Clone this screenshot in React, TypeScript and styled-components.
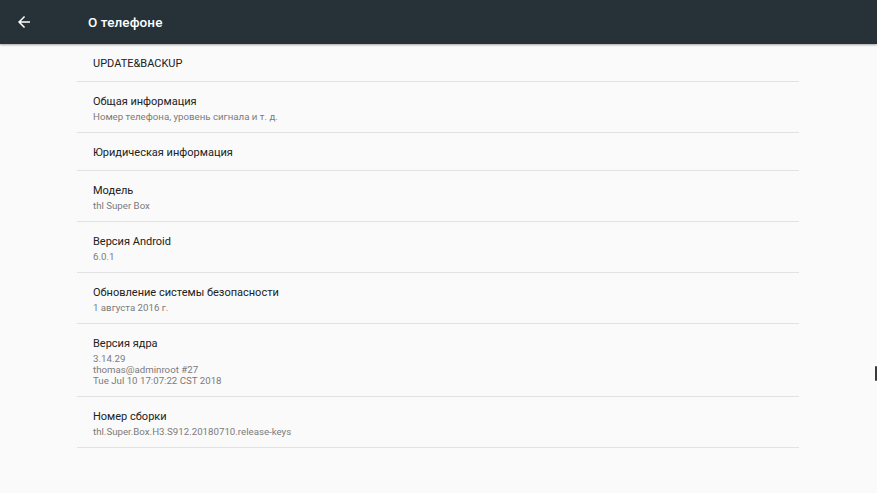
import React from "react";
import styled, { createGlobalStyle } from "styled-components";

const Global = createGlobalStyle`
  html, body { margin: 0; padding: 0; background: #fafafa; }
  body { font-family: Roboto, "Noto Sans", sans-serif; -webkit-font-smoothing: antialiased; }
`;

const Page = styled.div`
  width: 877px;
  height: 493px;
  background: #fafafa;
  position: relative;
  overflow: hidden;
  display: flex;
  flex-direction: column;
`;

const Toolbar = styled.header`
  height: 44px;
  background: #263238;
  display: flex;
  align-items: center;
  box-shadow: 0 1px 2px rgba(0, 0, 0, 0.35);
  flex-shrink: 0;
  position: relative;
  z-index: 1;
`;

const BackButton = styled.div`
  width: 18px;
  height: 18px;
  margin-left: 15px;
  margin-top: -1px;
  display: flex;
  align-items: center;
  justify-content: center;
`;

const Title = styled.h1`
  margin: -1px 0 0 55px;
  font-size: 13.5px;
  font-weight: 500;
  color: #ffffff;
  letter-spacing: 0.1px;
`;

const List = styled.div`
  margin: 0 78px 0 77px;
  display: flex;
  flex-direction: column;
`;

const Row = styled.div`
  padding: 12px 16px 10px 16px;
  border-bottom: 1px solid #e2e2e2;
  display: flex;
  flex-direction: column;
`;

const ItemTitle = styled.div`
  font-size: 11px;
  line-height: 15px;
  color: #212121;
`;

const ItemSub = styled.div`
  font-size: 9.7px;
  line-height: 11px;
  color: #7a7a7a;
  margin-top: 2px;
`;

const ScrollThumb = styled.div`
  position: absolute;
  right: 0;
  top: 366px;
  width: 2px;
  height: 15px;
  background: #3a3a3a;
  border-radius: 1px;
`;

type Item = { title: string; sub?: string[] };

const items: Item[] = [
  { title: "UPDATE&BACKUP" },
  { title: "Общая информация", sub: ["Номер телефона, уровень сигнала и т. д."] },
  { title: "Юридическая информация" },
  { title: "Модель", sub: ["thl Super Box"] },
  { title: "Версия Android", sub: ["6.0.1"] },
  { title: "Обновление системы безопасности", sub: ["1 августа 2016 г."] },
  {
    title: "Версия ядра",
    sub: ["3.14.29", "thomas@adminroot #27", "Tue Jul 10 17:07:22 CST 2018"],
  },
  { title: "Номер сборки", sub: ["thl.Super.Box.H3.S912.20180710.release-keys"] },
];

export default function App() {
  return (
    <Page>
      <Global />
      <Toolbar>
        <BackButton>
          <svg width="18" height="18" viewBox="0 0 24 24" fill="#ffffff">
            <path d="M20 11H7.83l5.59-5.59L12 4l-8 8 8 8 1.41-1.41L7.83 13H20v-2z" />
          </svg>
        </BackButton>
        <Title>О телефоне</Title>
      </Toolbar>
      <List>
        {items.map((it) => (
          <Row key={it.title}>
            <ItemTitle>{it.title}</ItemTitle>
            {it.sub && (
              <ItemSub>
                {it.sub.map((s) => (
                  <div key={s}>{s}</div>
                ))}
              </ItemSub>
            )}
          </Row>
        ))}
      </List>
      <ScrollThumb />
    </Page>
  );
}
